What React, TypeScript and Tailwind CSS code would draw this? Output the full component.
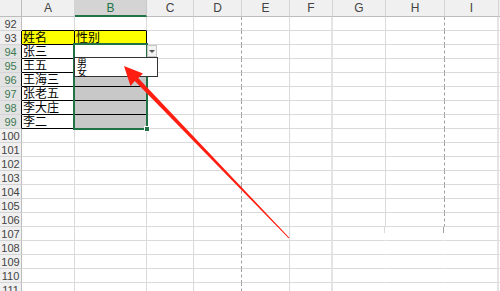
import React from 'react';

const COLS = ['A', 'B', 'C', 'D', 'E', 'F', 'G', 'H', 'I'];

const DATA: Record<number, [string, string]> = {
  93: ['姓名', '性别'],
  94: ['张三', ''],
  95: ['王五', ''],
  96: ['王海三', ''],
  97: ['张老五', ''],
  98: ['李大庄', ''],
  99: ['李二', ''],
};

const ROWS = Array.from({ length: 20 }, (_, i) => 92 + i);

function headerClass(ci: number) {
  if (ci === 1) {
    return 'h-[17px] bg-[#d4d4d4] border-r border-b-2 border-r-[#c8c8c8] border-b-[#217346] text-center text-[12px] leading-[16px] text-[#217346]';
  }
  return 'h-[17px] bg-[#f0f0f0] border-r border-b border-r-[#d4d4d4] border-b-[#bdbdbd] text-center text-[12px] leading-[16px] text-[#444]';
}

function rowHeadClass(row: number) {
  const sel = row >= 94 && row <= 99;
  const table = row >= 93 && row <= 99;
  let c = 'h-[14px] border-r border-b border-b-[#d4d4d4] text-center text-[11px] leading-[14px] ';
  c += sel ? 'bg-[#e3e3e3] text-[#3d7a52] ' : 'bg-[#f0f0f0] text-[#444] ';
  c += table ? 'border-r-black' : 'border-r-[#bdbdbd]';
  return c;
}

function cellClass(row: number, ci: number) {
  const inTable = row >= 93 && row <= 99 && ci <= 1;
  let c = 'h-[14px] border-r border-b overflow-hidden whitespace-nowrap text-[12px] leading-[14px] pl-[1px] text-black ';
  if (inTable) {
    c += 'border-r-black border-b-black ';
    if (row === 93) c += 'bg-[#ffff00] ';
    else if (ci === 1 && row >= 95) c += 'bg-[#c8c8c8] ';
    else c += 'bg-white ';
    return c;
  }
  if (row === 92 && ci <= 1) return c + 'border-r-[#dadada] border-b-black bg-white';
  c += 'border-b-[#dadada] bg-white ';
  if ((ci === 6 || ci === 7) && row >= 107) return c + 'border-r-transparent';
  if (ci === 3 || ci === 7) return c + '[border-right-style:dashed] border-r-[#a0a0a0]';
  if (ci === 5 || ci === 8) return c + 'border-r-[2px] border-r-[#e4e4e4]';
  return c + 'border-r-[#dadada]';
}

function RedArrow() {
  return (
    <svg className="pointer-events-none absolute left-0 top-0" width="500" height="291" viewBox="0 0 500 291">
      <polygon
        points="124,66 143,73.5 138.2,77.9 289.4,237.8 288.6,238.3 134.8,80.9 130.5,86"
        fill="#ff1e12"
      />
    </svg>
  );
}

export default function App() {
  return (
    <div className="relative h-[291px] w-[500px] overflow-hidden bg-white font-['Liberation_Sans','Noto_Sans_CJK_SC',sans-serif]">
      <div className="grid grid-cols-[22px_53px_72px_47px_48px_48px_43px_53px_59px_54px_1px]">
        <div className="h-[17px] border-r border-b border-r-[#bdbdbd] border-b-[#bdbdbd] bg-[#f0f0f0]" />
        {COLS.map((l, ci) => (
          <div key={l} className={headerClass(ci)}>
            {l}
          </div>
        ))}
        <div className="h-[17px] border-b border-b-[#bdbdbd] bg-[#f0f0f0]" />

        {ROWS.map((row) => (
          <React.Fragment key={row}>
            <div className={rowHeadClass(row)}>{row}</div>
            {COLS.map((l, ci) => (
              <div key={l} className={cellClass(row, ci)}>
                {ci <= 1 && DATA[row] ? DATA[row][ci] : null}
                {row === 107 && (ci === 6 || ci === 7) && (
                  <div
                    className={
                      ci === 6
                        ? 'ml-auto h-[6px] w-0 border-r border-r-[#dadada]'
                        : 'ml-auto h-[6px] w-0 border-r border-dashed border-r-[#a0a0a0]'
                    }
                  />
                )}
              </div>
            ))}
            <div className="h-[14px] border-b border-b-[#dadada] bg-white" />
          </React.Fragment>
        ))}
      </div>

      {/* selection B94:B99 */}
      <div className="absolute left-[73px] top-[43px] h-[87px] w-[75px] border-2 border-[#217346]" />
      <div className="absolute left-[144px] top-[126px] h-[6px] w-[6px] border border-white bg-[#217346]" />

      {/* dropdown button */}
      <div className="absolute left-[147px] top-[45px] flex h-[12px] w-[10px] items-center justify-center border border-[#c6c6c6] bg-[#f2f2f2]">
        <div className="h-0 w-0 border-x-[3px] border-t-[3px] border-x-transparent border-t-[#555]" />
      </div>

      {/* dropdown list */}
      <div className="absolute left-[74px] top-[57px] flex h-[20px] w-[84px] flex-col border border-[#333] bg-white pl-[2px] text-[10px] leading-[9px] text-black font-['Noto_Sans_CJK_SC',sans-serif]">
        <span>男</span>
        <span>女</span>
      </div>

      <RedArrow />
    </div>
  );
}
